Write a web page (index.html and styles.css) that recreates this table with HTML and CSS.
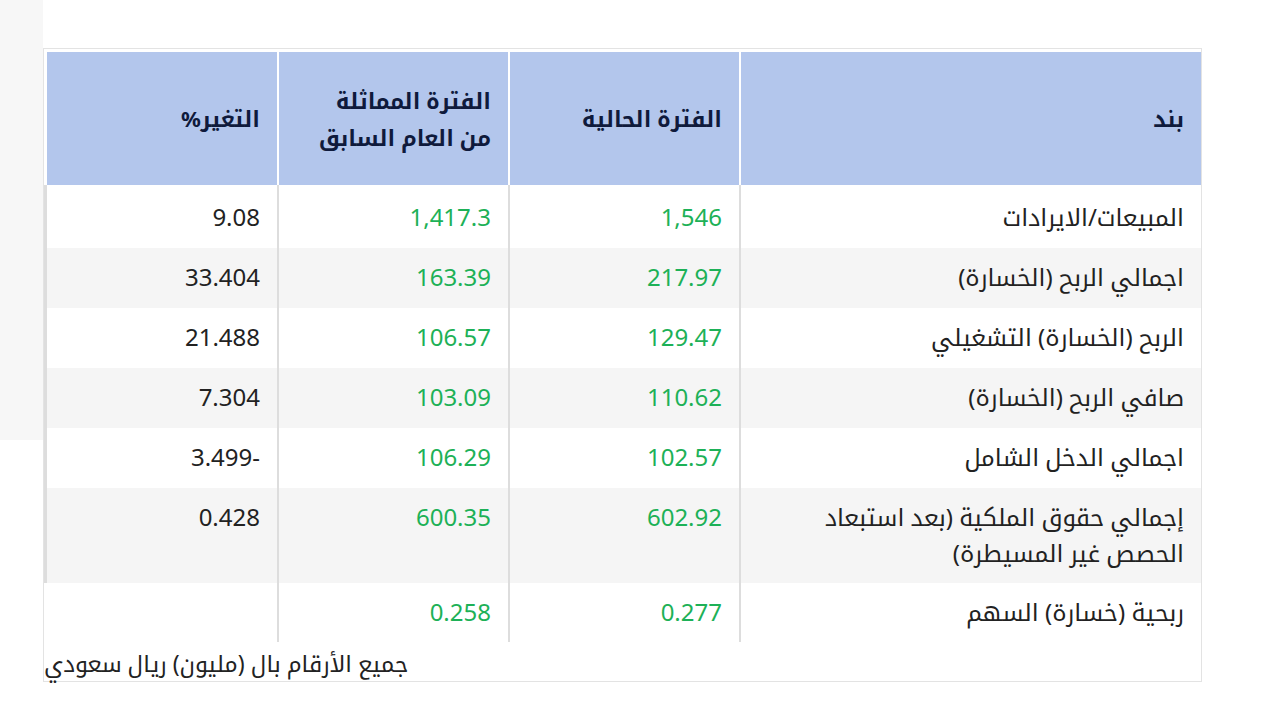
FILE: index.html
```html
<!DOCTYPE html>
<html lang="ar">
<head>
<meta charset="utf-8">
<title>جدول النتائج المالية</title>
<link rel="stylesheet" href="styles.css">
</head>
<body>
<div class="page">
  <div class="side"></div>
  <div class="card">
    <table class="fin" dir="rtl">
      <colgroup>
        <col class="c-item">
        <col class="c-num">
        <col class="c-num">
        <col class="c-chg">
      </colgroup>
      <thead>
        <tr>
          <th>بند</th>
          <th>الفترة الحالية</th>
          <th>الفترة المماثلة<br>من العام السابق</th>
          <th>التغير%</th>
        </tr>
      </thead>
      <tbody>
        <tr class="first">
          <td>المبيعات/الايرادات</td>
          <td class="num">1,546</td>
          <td class="num">1,417.3</td>
          <td class="chg"><span class="ltr">9.08</span></td>
        </tr>
        <tr>
          <td>اجمالي الربح (الخسارة)</td>
          <td class="num">217.97</td>
          <td class="num">163.39</td>
          <td class="chg"><span class="ltr">33.404</span></td>
        </tr>
        <tr>
          <td>الربح (الخسارة) التشغيلي</td>
          <td class="num">129.47</td>
          <td class="num">106.57</td>
          <td class="chg"><span class="ltr">21.488</span></td>
        </tr>
        <tr>
          <td>صافي الربح (الخسارة)</td>
          <td class="num">110.62</td>
          <td class="num">103.09</td>
          <td class="chg"><span class="ltr">7.304</span></td>
        </tr>
        <tr>
          <td>اجمالي الدخل الشامل</td>
          <td class="num">102.57</td>
          <td class="num">106.29</td>
          <td class="chg"><span class="ltr">3.499-</span></td>
        </tr>
        <tr class="wrap">
          <td>إجمالي حقوق الملكية (بعد استبعاد الحصص غير المسيطرة)</td>
          <td class="num">602.92</td>
          <td class="num">600.35</td>
          <td class="chg"><span class="ltr">0.428</span></td>
        </tr>
        <tr class="last">
          <td>ربحية (خسارة) السهم</td>
          <td class="num">0.277</td>
          <td class="num">0.258</td>
          <td class="chg empty"></td>
        </tr>
      </tbody>
    </table>
    <p class="note" dir="rtl">جميع الأرقام بال (مليون) ريال سعودي</p>
  </div>
</div>
</body>
</html>
```

FILE: styles.css
```css
html, body {
  margin: 0;
  padding: 0;
  background: #ffffff;
}

body {
  font-family: "Noto Sans", "Noto Kufi Arabic", "Noto Sans Arabic", "DejaVu Sans", sans-serif;
  color: #222222;
}

.page {
  display: flex;
  align-items: flex-start;
  width: 1280px;
  height: 720px;
}

.side {
  width: 43px;
  height: 440px;
  background: #f7f7f7;
  flex: none;
}

.card {
  margin-top: 48px;
  width: 1159px;
  box-sizing: border-box;
  border: 1px solid #e3e3e3;
}

.fin {
  width: 1157px;
  table-layout: fixed;
  border-collapse: separate;
  border-spacing: 0;
}

.c-item { width: 462px; }
.c-num { width: 231px; }
.c-chg { width: 233px; }

.fin th {
  background: #b3c6ec;
  color: #0f1a3c;
  font-weight: bold;
  font-size: 22px;
  line-height: 37px;
  height: 136px;
  box-sizing: border-box;
  text-align: right;
  vertical-align: middle;
  padding: 0 17px 0 12px;
  border-top: 3px solid #ffffff;
  border-left: 2px solid #ffffff;
}

.fin th:last-child {
  border-left-width: 3px;
}

.fin td {
  font-size: 24px;
  line-height: 36px;
  text-align: right;
  vertical-align: top;
  padding: 11px 17px 13px 60px;
  border-left: 2px solid #dddddd;
}

.fin td:last-child {
  border-left-width: 3px;
}

.fin tr.first td {
  padding-top: 14px;
}

.fin tr.wrap td {
  padding-bottom: 12px;
}

.fin tr.last td {
  padding-bottom: 12px;
}

.fin tbody tr:nth-child(even) td {
  background: #f5f5f5;
}

.fin td.num {
  color: #1db157;
}

.fin td.chg {
  color: #222222;
}

.ltr {
  direction: ltr;
  unicode-bidi: isolate;
}

.fin tr.last td.empty {
  border-left-color: transparent;
}

.note {
  margin: 3px 0 0;
  font-size: 23px;
  line-height: 36px;
  text-align: left;
  color: #222222;
}
```
